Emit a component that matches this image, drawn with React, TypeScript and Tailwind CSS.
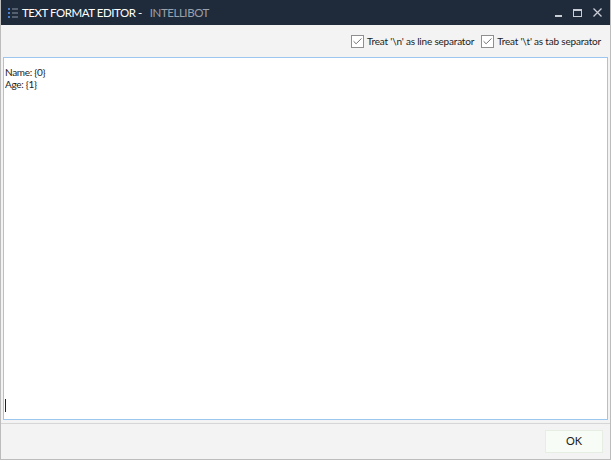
import { Check } from 'lucide-react'

function TitleIcon() {
  return (
    <svg width="10" height="12" viewBox="0 0 10 12" className="shrink-0">
      <rect x="0" y="1" width="2" height="2" fill="#4a7fd0" />
      <rect x="0" y="5" width="2" height="2" fill="#4a7fd0" />
      <rect x="0" y="9" width="2" height="2" fill="#4a7fd0" />
      <rect x="4" y="1.5" width="6" height="1" fill="#8a94a3" />
      <rect x="4" y="5.5" width="6" height="1" fill="#8a94a3" />
      <rect x="4" y="9.5" width="6" height="1" fill="#8a94a3" />
    </svg>
  )
}

function CheckOption({ label }: { label: string }) {
  return (
    <label className="flex items-center gap-[3px]">
      <span className="flex h-[13px] w-[13px] items-center justify-center border border-[#8f8f8f] bg-white">
        <Check className="h-[11px] w-[11px] text-[#333]" strokeWidth={1.5} />
      </span>
      <span className="text-[10px] tracking-[-0.2px] text-[#222]">{label}</span>
    </label>
  )
}

export default function App() {
  return (
    <div className="h-[461px] w-[612px] bg-white" style={{ fontFamily: 'Lato, "Noto Sans", sans-serif' }}>
      <div className="flex h-[460px] w-[611px] flex-col border-x border-b border-[#bcbcbc]">
        {/* Title bar */}
        <div className="flex h-[25px] items-center bg-[#1f2a3b] pl-[7px] pr-[8px]">
          <TitleIcon />
          <span className="ml-[4px] text-[11.5px] tracking-[-0.45px] text-white">TEXT FORMAT EDITOR -</span>
          <span className="ml-[8px] text-[11.5px] tracking-[-0.45px] text-[#9aa1ab]">INTELLIBOT</span>
          <div className="ml-auto flex items-center gap-[11px] text-[#c9ced6]">
            <span className="mt-[7px] block h-[1.5px] w-[7px] bg-[#c9ced6]" />
            <span className="block h-[8px] w-[9px] border border-t-2 border-[#c9ced6]" />
            <svg width="9" height="9" viewBox="0 0 9 9">
              <path d="M0.5 0.5 L8.5 8.5 M8.5 0.5 L0.5 8.5" stroke="#c9ced6" strokeWidth="1.3" />
            </svg>
          </div>
        </div>

        {/* Options */}
        <div className="flex h-[32px] items-center justify-end gap-[7px] bg-[#f3f3f3] pr-[9px]">
          <CheckOption label="Treat '\n' as line separator" />
          <CheckOption label="Treat '\t' as tab separator" />
        </div>

        {/* Editor */}
        <div className="flex flex-col bg-[#f3f3f3] px-[2px] pb-[3px]">
          <div className="flex h-[363px] flex-col border border-[#9cc6ee] bg-white pl-[1px] pt-[8px] text-[10px] leading-[12px] tracking-[-0.3px] text-[#222]">
            <div>Name: {'{0}'}</div>
            <div>Age: {'{1}'}</div>
            <div className="mt-auto mb-[7px] h-[13px] w-[1px] bg-[#222]" />
          </div>
        </div>

        {/* Footer */}
        <div className="flex flex-1 items-center justify-end border-t border-[#d6d6d6] bg-[#f3f3f3] pr-[7px]">
          <button className="h-[23px] w-[58px] border border-[#e6eee4] bg-[#f8fcf6] text-[11px] text-[#222]">OK</button>
        </div>
      </div>
    </div>
  )
}
